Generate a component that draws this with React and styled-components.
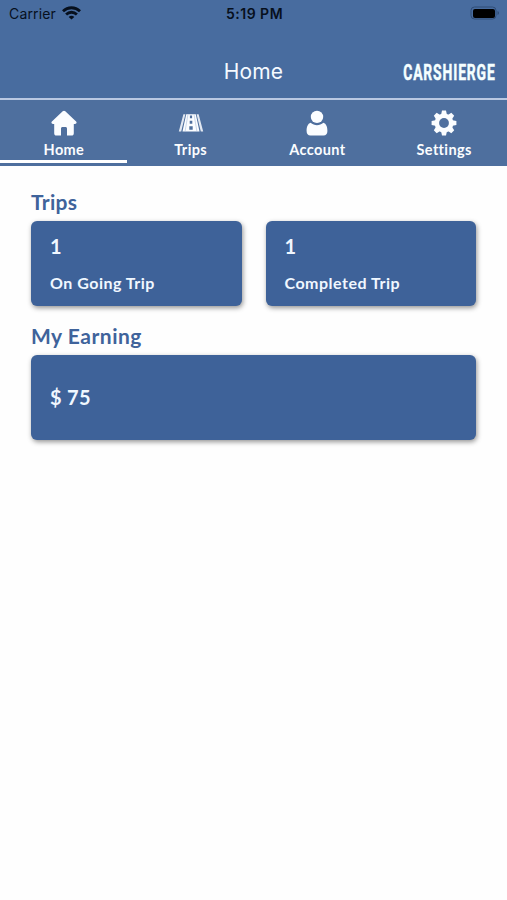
import React, { useState } from 'react';
import styled, { createGlobalStyle } from 'styled-components';

const GlobalStyle = createGlobalStyle`
  * {
    box-sizing: border-box;
  }

  body {
    margin: 0;
    background: #fff;
    font-family: Lato, 'Open Sans', sans-serif;
  }
`;

// Styled components
const Screen = styled.div`
  min-height: 900px;
  background: #fefefe;
`;

const StatusBar = styled.div`
  display: grid;
  grid-template-columns: 1fr auto 1fr;
  align-items: center;
  height: 28px;
  padding: 0 7px 0 9px;
  color: #07101d;
  font-family: Inter, sans-serif;
  font-size: 14px;
  line-height: 28px;
`;

const Carrier = styled.div`
  display: flex;
  align-items: center;
  gap: 6px;
  letter-spacing: 0.15px;

  svg {
    margin-top: -2px;
  }
`;

const Clock = styled.div`
  font-weight: 600;
  letter-spacing: 0.5px;
`;

const Battery = styled.svg`
  justify-self: end;
  margin-top: -2px;
`;

const Header = styled.header`
  height: 100px;
  background: #486c9f;
  border-bottom: 2px solid #b9c8e2;
`;

const TitleBar = styled.div`
  display: grid;
  grid-template-columns: 1fr auto 1fr;
  align-items: center;
  height: 70px;
  padding: 18px 11px 0;
`;

const Title = styled.h1`
  grid-column: 2;
  margin: 0;
  color: #f5faff;
  font: 400 21px/26px Inter, sans-serif;
  letter-spacing: 0.2px;
`;

const Logo = styled.div`
  justify-self: end;
  color: #f5ffff;
  font: 700 22.5px/28px Roboto, sans-serif;
  letter-spacing: 1.4px;
  white-space: nowrap;
  -webkit-text-stroke: 0.5px #f5ffff;
  transform: scaleX(0.618);
  transform-origin: right center;
`;

const TabBar = styled.nav`
  display: grid;
  grid-template-columns: repeat(4, 1fr);
  height: 66px;
  background: #4e6f9e;
`;

const Tab = styled.button`
  display: flex;
  flex-direction: column;
  align-items: center;
  padding: 10px 0 0 1px;
  background: none;
  border: none;
  border-bottom: 3px solid ${props => props.$active ? '#fff' : 'transparent'};
  margin-bottom: 3px;
  color: #fbfdff;
  font: 700 14.5px/20px Lato, sans-serif;
  letter-spacing: 0.35px;
  cursor: pointer;

  svg {
    display: block;
    margin-bottom: 4px;
  }
`;

const Content = styled.main`
  padding: 22px 31px;
`;

const SectionHeading = styled.h2`
  margin: 0 0 6px;
  color: #3f639b;
  font-size: 21px;
  font-weight: 700;
  line-height: 27px;
  letter-spacing: ${props => props.$spacing};
`;

const CardRow = styled.div`
  display: grid;
  grid-template-columns: 1fr 1fr;
  gap: 24px;
  margin-bottom: 16px;
`;

const Card = styled.div`
  display: flex;
  flex-direction: column;
  justify-content: center;
  height: 85px;
  padding: 0 19px 1px;
  background: #3e6299;
  border-radius: 6px;
  box-shadow: 1px 2px 5px rgba(0, 0, 0, 0.42);
  color: #f0f7ff;
`;

const CardValue = styled.div`
  font-size: 20px;
  font-weight: 700;
  line-height: 26px;
  letter-spacing: 0.3px;
`;

const CardLabel = styled.div`
  margin-top: 14px;
  font-size: 16px;
  font-weight: 700;
  line-height: 20px;
  letter-spacing: 0.5px;
`;

const WifiIcon = () => (
  <svg width="19" height="14" viewBox="0 0 19 14" fill="none" stroke="currentColor" strokeWidth="2.8">
    <path d="M1 5.2C5.8.6 13.2.6 18 5.2" />
    <path d="M4.1 8.4c3.1-2.9 7.7-2.9 10.8 0" />
    <path d="M9.5 13.6 6.7 10.9c1.6-1.4 4-1.4 5.6 0z" fill="currentColor" stroke="none" />
  </svg>
);

const HomeIcon = () => (
  <svg width="26" height="26" viewBox="0 0 26 26" fill="currentColor">
    <path d="M11.7 1.2a2 2 0 0 1 2.6 0l10.8 10.2c1 1 .3 2.5-1.1 2.5h-1.2v9.3c0 1.4-.8 2.3-2.2 2.3H16v-6.8c0-1-.6-1.7-1.6-1.7h-2.8c-1 0-1.6.7-1.6 1.7v6.8H5.4c-1.4 0-2.2-.9-2.2-2.3v-9.3H2c-1.4 0-2.1-1.5-1.1-2.5z" />
  </svg>
);

const RoadIcon = () => (
  <svg width="26" height="26" viewBox="0 0 26 26" fill="currentColor">
    <path d="M5.4 4.2h2L3.2 21.6H.8zM18.6 4.2h2l4.6 17.4h-2.4z" opacity="0.85" />
    <path fillRule="evenodd" d="M8.2 4.2h9.6l3.7 17.4h-17zM11.9 5.4v2.8h2.2V5.4zm-.2 5.3v3h2.6v-3zm-.4 5.6v3.5h3.4v-3.5z" />
    <path d="m9.9 4.8-2.8 16.4M16.1 4.8l2.8 16.4" stroke="#a9bddb" strokeWidth="0.6" />
  </svg>
);

const UserIcon = () => (
  <svg width="26" height="26" viewBox="0 0 26 26" fill="currentColor">
    <circle cx="13" cy="6.9" r="6.2" />
    <path d="M6.6 12.7c3.7 3.3 9.1 3.3 12.8 0 2.8.9 4 4.1 4 8.3 0 2.8-1.4 4.5-3.8 4.5H6.4c-2.4 0-3.8-1.7-3.8-4.5 0-4.2 1.2-7.4 4-8.3z" />
  </svg>
);

const GearIcon = () => (
  <svg width="26" height="26" viewBox="0 0 26 26">
    <g fill="currentColor">
      {[0, 45, 90, 135].map(angle => (
        <path key={angle} d="M11 .6h4l1.1 5v14.8l-1.1 5h-4l-1.1-5V5.6z" transform={`rotate(${angle} 13 13)`} />
      ))}
      <circle cx="13" cy="13" r="9.4" />
    </g>
    <circle cx="13" cy="13" r="4.9" fill="#4e6f9e" />
  </svg>
);

const tabs = [
  { name: 'Home', icon: <HomeIcon /> },
  { name: 'Trips', icon: <RoadIcon /> },
  { name: 'Account', icon: <UserIcon /> },
  { name: 'Settings', icon: <GearIcon /> },
];

const App = () => {
  const [activeTab, setActiveTab] = useState('Home');

  return (
    <Screen>
      <GlobalStyle />
      <Header>
        <StatusBar>
          <Carrier>
            Carrier
            <WifiIcon />
          </Carrier>
          <Clock>5:19 PM</Clock>
          <Battery width="30" height="14" viewBox="0 0 30 14">
            <rect x="1" y="1" width="25" height="12" rx="3.5" fill="none" stroke="#2f4c77" />
            <rect x="3" y="3" width="22" height="9" rx="2" fill="#000" />
            <path d="M27.5 5v4q1.5-.6 1.5-2t-1.5-2" fill="#2f4c77" />
          </Battery>
        </StatusBar>
        <TitleBar>
          <Title>Home</Title>
          <Logo>CARSHIERGE</Logo>
        </TitleBar>
      </Header>
      <TabBar>
        {tabs.map(tab => (
          <Tab key={tab.name} $active={tab.name === activeTab} onClick={() => setActiveTab(tab.name)}>
            {tab.icon}
            {tab.name}
          </Tab>
        ))}
      </TabBar>
      <Content>
        <SectionHeading $spacing="0.3px">Trips</SectionHeading>
        <CardRow>
          <Card>
            <CardValue>1</CardValue>
            <CardLabel>On Going Trip</CardLabel>
          </Card>
          <Card>
            <CardValue>1</CardValue>
            <CardLabel>Completed Trip</CardLabel>
          </Card>
        </CardRow>
        <SectionHeading $spacing="0.5px">My Earning</SectionHeading>
        <Card>
          <CardValue>$ 75</CardValue>
        </Card>
      </Content>
    </Screen>
  );
};

export default App;
